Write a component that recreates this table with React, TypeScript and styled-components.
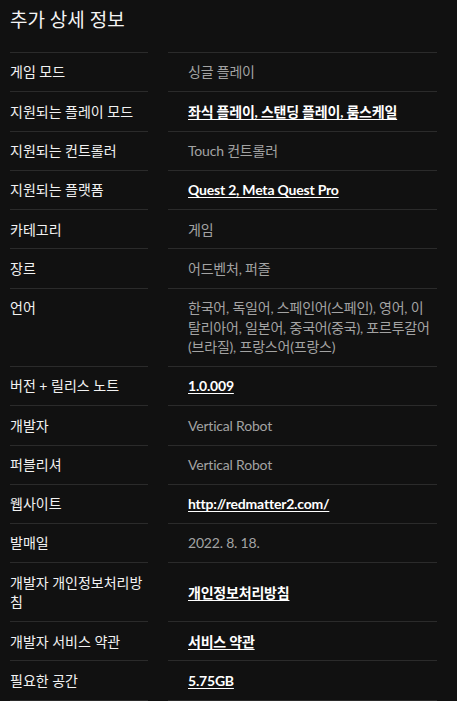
import React from "react";
import styled, { createGlobalStyle } from "styled-components";

type Item = { label: string; value: string; link?: boolean };

const items: Item[] = [
  { label: "게임 모드", value: "싱글 플레이" },
  { label: "지원되는 플레이 모드", value: "좌식 플레이, 스탠딩 플레이, 룸스케일", link: true },
  { label: "지원되는 컨트롤러", value: "Touch 컨트롤러" },
  { label: "지원되는 플랫폼", value: "Quest 2, Meta Quest Pro", link: true },
  { label: "카테고리", value: "게임" },
  { label: "장르", value: "어드벤처, 퍼즐" },
  {
    label: "언어",
    value:
      "한국어, 독일어, 스페인어(스페인), 영어, 이탈리아어, 일본어, 중국어(중국), 포르투갈어(브라질), 프랑스어(프랑스)",
  },
  { label: "버전 + 릴리스 노트", value: "1.0.009", link: true },
  { label: "개발자", value: "Vertical Robot" },
  { label: "퍼블리셔", value: "Vertical Robot" },
  { label: "웹사이트", value: "http://redmatter2.com/", link: true },
  { label: "발매일", value: "2022. 8. 18." },
  { label: "개발자 개인정보처리방침", value: "개인정보처리방침", link: true },
  { label: "개발자 서비스 약관", value: "서비스 약관", link: true },
  { label: "필요한 공간", value: "5.75GB", link: true },
];

const GlobalStyle = createGlobalStyle`
  html, body {
    margin: 0;
    padding: 0;
    background: #111111;
  }
  body {
    font-family: Lato, "Noto Sans CJK KR", sans-serif;
    color: #f2f2f2;
  }
`;

export default function App() {
  return (
    <>
      <GlobalStyle />
      <Styled.Page>
        <Styled.Title>추가 상세 정보</Styled.Title>
        <Styled.List>
          {items.map((item, i) => (
            <Styled.Row key={item.label} $last={i === items.length - 1}>
              <Styled.Label>{item.label}</Styled.Label>
              <Styled.Value>
                {item.link ? (
                  <Styled.Link href="#">{item.value}</Styled.Link>
                ) : (
                  <Styled.Plain>{item.value}</Styled.Plain>
                )}
              </Styled.Value>
            </Styled.Row>
          ))}
        </Styled.List>
      </Styled.Page>
    </>
  );
}

const Styled = {
  Page: styled.div`
    padding: 8px 20px 0 10px;
  `,
  Title: styled.h2`
    margin: 0 0 20px;
    font-size: 19px;
    line-height: 24px;
    font-weight: 400;
    color: #f4f4f4;
  `,
  List: styled.div`
    display: flex;
    flex-direction: column;
  `,
  Row: styled.div<{ $last: boolean }>`
    display: grid;
    grid-template-columns: 138px 1fr;
    column-gap: 20px;
    font-size: 14px;
    line-height: 19.5px;

    & > div {
      border-top: 1px solid #2b2b2b;
      border-bottom: ${(p) => (p.$last ? "1px solid #2b2b2b" : "none")};
      padding: 9.4px 0;
    }
  `,
  Label: styled.div`
    color: #f2f2f2;
  `,
  Value: styled.div`
    display: flex;
    align-items: center;
    padding-left: 20px !important;
    padding-right: 5px !important;
    letter-spacing: -0.2px;
  `,
  Plain: styled.span`
    color: #a3a3a3;
  `,
  Link: styled.a`
    color: #ffffff;
    font-weight: 700;
    text-decoration: underline;
    text-underline-offset: 2px;
  `,
};
